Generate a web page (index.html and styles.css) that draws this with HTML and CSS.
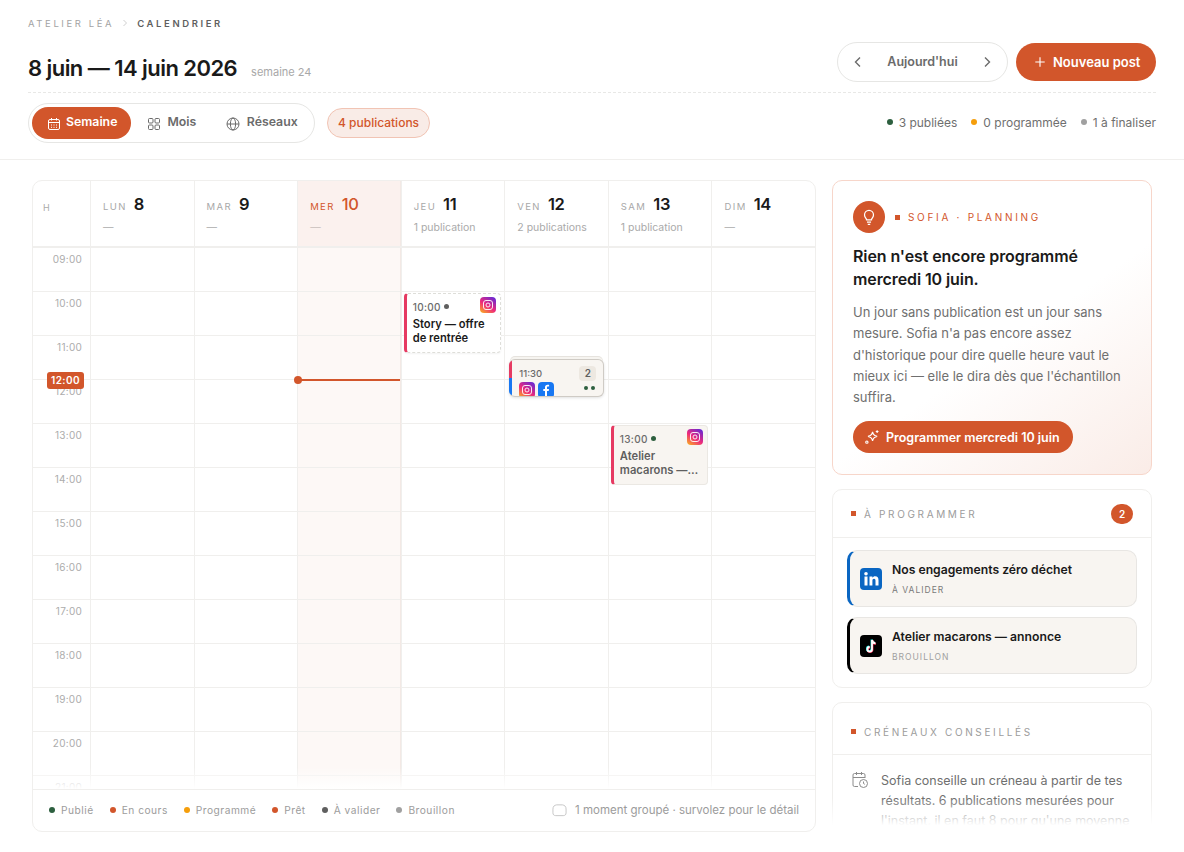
FILE: index.html
```html
<!DOCTYPE html>
<html lang="fr">
<head>
  <meta charset="UTF-8" />
  <meta name="viewport" content="width=device-width, initial-scale=1" />
  <title>Calendrier - Atelier Léa</title>
  <link rel="stylesheet" href="styles.css">
</head>
<body>
  <header class="top">
    <div class="crumbs">
      <span>Atelier Léa</span>
      <svg class="crumb-sep" viewBox="0 0 8 8"><path d="M2.500 1l3 3-3 3" /></svg>
      <strong>Calendrier</strong>
    </div>
    <div class="title-row">
      <div class="title-block">
        <h1>8 juin — 14 juin 2026</h1>
        <span class="week">semaine 24</span>
      </div>
      <div class="actions">
        <div class="nav-pill">
          <svg class="chev" viewBox="0 0 16 16"><path d="M10 3.500L5.500 8l4.500 4.500" /></svg>
          <span>Aujourd'hui</span>
          <svg class="chev" viewBox="0 0 16 16"><path d="M6 3.500L10.500 8 6 12.500" /></svg>
        </div>
        <button class="btn-new">
          <svg viewBox="0 0 14 14"><path d="M7 1.500v11M1.500 7h11" /></svg>
          Nouveau post
        </button>
      </div>
    </div>
    <div class="tool-row">
      <div class="tool-left">
        <div class="tabs">
          <div class="tab active">
            <svg viewBox="0 0 14 14"><rect x="1.500" y="2.500" width="11" height="10" rx="1.500" /><path d="M1.500 5.500h11M4.500 1v2.500M9.500 1v2.500M4 8h1M6.500 8h1M9 8h1M4 10.300h1M6.500 10.300h1M9 10.300h1" /></svg>
            Semaine
          </div>
          <div class="tab">
            <svg viewBox="0 0 14 14"><rect x="1.500" y="1.500" width="4.500" height="4.500" rx="1" /><rect x="8" y="1.500" width="4.500" height="4.500" rx="1" /><rect x="1.500" y="8" width="4.500" height="4.500" rx="1" /><rect x="8" y="8" width="4.500" height="4.500" rx="1" /></svg>
            Mois
          </div>
          <div class="tab">
            <svg viewBox="0 0 14 14"><circle cx="7" cy="7" r="6" /><ellipse cx="7" cy="7" rx="2.600" ry="6" /><path d="M1 7h12" /></svg>
            Réseaux
          </div>
        </div>
        <span class="count-pill">4 publications</span>
      </div>
      <div class="stats">
        <span><i class="dot green"></i>3 publiées</span>
        <span><i class="dot orange"></i>0 programmée</span>
        <span><i class="dot grey"></i>1 à finaliser</span>
      </div>
    </div>
  </header>

  <main class="page">
    <section class="calendar">
      <div class="cal-head">
        <div class="head-h">H</div>
        <div class="head-day"><div><span class="dname">Lun</span><span class="dnum">8</span></div><p>—</p></div>
        <div class="head-day"><div><span class="dname">Mar</span><span class="dnum">9</span></div><p>—</p></div>
        <div class="head-day today"><div><span class="dname">Mer</span><span class="dnum">10</span></div><p>—</p></div>
        <div class="head-day"><div><span class="dname">Jeu</span><span class="dnum">11</span></div><p>1 publication</p></div>
        <div class="head-day"><div><span class="dname">Ven</span><span class="dnum">12</span></div><p>2 publications</p></div>
        <div class="head-day"><div><span class="dname">Sam</span><span class="dnum">13</span></div><p>1 publication</p></div>
        <div class="head-day"><div><span class="dname">Dim</span><span class="dnum">14</span></div><p>—</p></div>
      </div>

      <div class="cal-body">
        <div class="cal-grid">
          <div class="hours">
            <div>09:00</div><div>10:00</div><div>11:00</div><div>12:00</div><div>13:00</div>
            <div>14:00</div><div>15:00</div><div>16:00</div><div>17:00</div><div>18:00</div>
            <div>19:00</div><div>20:00</div><div>21:00</div>
            <span class="now-badge">12:00</span>
          </div>
          <div class="day"></div>
          <div class="day"></div>
          <div class="day today">
            <div class="now-line"></div>
          </div>
          <div class="day">
            <article class="event event-draft">
              <div class="ev-top"><span class="ev-time">10:00</span><i class="dot slate"></i></div>
              <span class="ig ev-net"><svg viewBox="0 0 16 16"><rect x="3.500" y="3.500" width="9" height="9" rx="2.500" /><circle cx="8" cy="8" r="2" /></svg></span>
              <h4>Story — offre de rentrée</h4>
            </article>
          </div>
          <div class="day">
            <article class="event event-group">
              <div class="ev-top"><span class="ev-time">11:30</span></div>
              <span class="group-n">2</span>
              <div class="group-icons">
                <span class="ig"><svg viewBox="0 0 16 16"><rect x="3.500" y="3.500" width="9" height="9" rx="2.500" /><circle cx="8" cy="8" r="2" /></svg></span>
                <span class="fb"><svg viewBox="0 0 16 16"><path d="M9 15V9h1.700l.3-2H9V5.600c0-.6.200-1 1-1h1.100V2.800c-.3 0-.9-.1-1.500-.1C8 2.700 7 3.700 7 5.300V7H5.300v2H7v6z" /></svg></span>
              </div>
              <div class="group-dots"><i class="dot green"></i><i class="dot green"></i></div>
            </article>
          </div>
          <div class="day">
            <article class="event event-done">
              <div class="ev-top"><span class="ev-time">13:00</span><i class="dot green"></i></div>
              <span class="ig ev-net"><svg viewBox="0 0 16 16"><rect x="3.500" y="3.500" width="9" height="9" rx="2.500" /><circle cx="8" cy="8" r="2" /></svg></span>
              <h4 class="clamp">Atelier macarons — annonce</h4>
            </article>
          </div>
          <div class="day"></div>
        </div>
        <div class="cal-fade"></div>
      </div>

      <footer class="legend">
        <div class="legend-list">
          <span><i class="dot green"></i>Publié</span>
          <span><i class="dot rust"></i>En cours</span>
          <span><i class="dot orange"></i>Programmé</span>
          <span><i class="dot rust"></i>Prêt</span>
          <span><i class="dot slate"></i>À valider</span>
          <span><i class="dot grey"></i>Brouillon</span>
        </div>
        <div class="legend-note">
          <svg viewBox="0 0 16 14"><path d="M1 6c0-3 1.500-4 4-4.500h6c2.500.5 4 1.500 4 4.500v4c0 2-1 3-3 3H4c-2 0-3-1-3-3z" /></svg>
          1 moment groupé · survolez pour le détail
        </div>
      </footer>
    </section>

    <aside class="side">
      <section class="sofia">
        <div class="sofia-head">
          <span class="sofia-icon">
            <svg viewBox="0 0 16 16"><path d="M5.800 10.500c0-1.200-1.800-2-1.800-4.300a4 4 0 0 1 8 0c0 2.300-1.800 3.100-1.800 4.300zM6.200 12.500h3.600M6.900 14.500h2.200" /></svg>
          </span>
          <span class="eyebrow"><i class="sq"></i>Sofia · Planning</span>
        </div>
        <h2>Rien n'est encore programmé mercredi 10 juin.</h2>
        <p>Un jour sans publication est un jour sans mesure. Sofia n'a pas encore assez d'historique pour dire quelle heure vaut le mieux ici — elle le dira dès que l'échantillon suffira.</p>
        <button class="btn-plan">
          <svg viewBox="0 0 14 14"><path d="M7.500 2.500c.4 2.400 1.400 3.500 4 4-2.600.5-3.600 1.600-4 4-.4-2.400-1.400-3.500-4-4 2.600-.5 3.600-1.600 4-4z" /><path d="M11.500 1v2.400M10.300 2.200h2.400" /><circle cx="2.500" cy="11.500" r="1" /></svg>
          Programmer mercredi 10 juin
        </button>
      </section>

      <section class="panel">
        <div class="panel-head">
          <span class="panel-title"><i class="sq"></i>À programmer</span>
          <span class="panel-count">2</span>
        </div>
        <div class="todo-list">
          <div class="todo todo-li">
            <span class="net li"><svg viewBox="0 0 22 22"><rect x="4.500" y="8.500" width="3" height="9" /><circle cx="6" cy="5.700" r="1.800" /><path d="M9.500 8.500h2.900v1.300c.5-.9 1.500-1.500 2.800-1.500 2.300 0 3.300 1.400 3.300 3.900v5.300h-3v-4.700c0-1.200-.4-2-1.500-2s-1.600.9-1.600 2v4.700h-2.900z" /></svg></span>
            <div><h3>Nos engagements zéro déchet</h3><small class="st-dark">À valider</small></div>
          </div>
          <div class="todo todo-tt">
            <span class="net tt">
              <svg viewBox="0 0 22 22">
                <path class="tt-c" d="M11.500 4.500v9.300a2.300 2.300 0 1 1-2.300-2.300M11.500 4.500c.3 2 1.500 3.200 3.500 3.400" />
                <path class="tt-r" d="M12.500 5.500v9.300a2.300 2.300 0 1 1-2.300-2.300M12.500 5.500c.3 2 1.500 3.200 3.500 3.400" />
                <path class="tt-w" d="M12 5v9.300a2.300 2.300 0 1 1-2.300-2.300M12 5c.3 2 1.500 3.200 3.500 3.400" />
              </svg>
            </span>
            <div><h3>Atelier macarons — annonce</h3><small>Brouillon</small></div>
          </div>
        </div>
      </section>

      <section class="panel">
        <div class="panel-head panel-head-slots">
          <span class="panel-title"><i class="sq"></i>Créneaux conseillés</span>
        </div>
        <div class="slots">
          <svg viewBox="0 0 18 18"><path d="M7 15.500H3.500a1.500 1.500 0 0 1-1.500-1.500V4a1.500 1.500 0 0 1 1.500-1.500h9A1.500 1.500 0 0 1 14 4v3M2 6.500h12M5.500 1v3M10.500 1v3" /><circle cx="12.500" cy="12.500" r="4" /><path d="M12.500 10.500v2l1.300.8" /></svg>
          <p>Sofia conseille un créneau à partir de tes résultats. 6 publications mesurées pour l'instant, il en faut 8 pour qu'une moyenne soit fiable.</p>
        </div>
      </section>
      <div class="side-fade"></div>
    </aside>
  </main>
</body>
</html>
```

FILE: styles.css
```css
* {
  box-sizing: border-box;
}
body {
  margin: 0;
  height: 852px;
  overflow: hidden;
  font-family: Inter, "Noto Sans", sans-serif;
  background-color: #fff;
  color: #1a1a1a;
}
h1, h2, h3, h4, p {
  margin: 0;
}
i {
  display: block;
  flex: none;
}
button {
  font-family: inherit;
  border: none;
  cursor: pointer;
}

/* header */
.top {
  height: 160px;
  padding: 16px 28px 0;
  border-bottom: 1px solid #f0efed;
}
.crumbs {
  display: flex;
  align-items: center;
  height: 14px;
  font-size: 9.5px;
  letter-spacing: 2.600px;
  text-transform: uppercase;
  color: #a3a3a3;
}
.crumbs strong {
  font-weight: 600;
  color: #5f5f5f;
}
.crumb-sep {
  width: 8px;
  height: 8px;
  margin: 0 8px 0 7px;
  fill: none;
  stroke: #d0d0d0;
  stroke-width: 1;
}
.title-row {
  display: flex;
  justify-content: space-between;
  align-items: flex-end;
  margin-top: 12px;
  height: 51px;
  padding-bottom: 10px;
  border-bottom: 1px dashed #e8e8e6;
}
.title-block {
  display: flex;
  align-items: baseline;
  gap: 14px;
  margin-bottom: -1px;
}
h1 {
  font-size: 22px;
  line-height: 30px;
  font-weight: 600;
  letter-spacing: -0.55px;
  color: #1a1a1a;
}
.week {
  font-size: 11px;
  color: #a8a8a8;
}
.actions {
  display: flex;
  align-items: center;
  gap: 8px;
}
.nav-pill {
  display: flex;
  align-items: center;
  justify-content: space-between;
  width: 171px;
  height: 40px;
  padding: 0 12px 0;
  border: 1px solid #e6e6e4;
  border-radius: 20px;
  font-size: 12.5px;
  font-weight: 600;
  color: #6b6b6b;
}
.nav-pill span {
  margin-bottom: 2px;
}
.chev {
  width: 16px;
  height: 16px;
  fill: none;
  stroke: #6b6b6b;
  stroke-width: 1.400;
}
.btn-new {
  display: flex;
  align-items: center;
  gap: 7px;
  width: 140px;
  height: 38px;
  padding: 0 0 0 18px;
  border-radius: 19px;
  background-color: #d2562b;
  color: #fff;
  font-size: 13px;
  font-weight: 600;
}
.btn-new svg {
  width: 12px;
  height: 12px;
  fill: none;
  stroke: #fff;
  stroke-width: 1.300;
}
.tool-row {
  display: flex;
  justify-content: space-between;
  align-items: center;
  margin-top: 10px;
}
.tool-left {
  display: flex;
  align-items: center;
  gap: 12px;
}
.tabs {
  display: flex;
  align-items: center;
  gap: 4px;
  width: 287px;
  height: 40px;
  padding: 3px;
  border: 1px solid #e6e6e4;
  border-radius: 20px;
}
.tab {
  flex: none;
  display: flex;
  align-items: center;
  gap: 6.500px;
  height: 32px;
  padding: 0 13px 3px;
  font-size: 12.3px;
  font-weight: 600;
  color: #6b6b6b;
  border-radius: 16px;
}
.tab svg {
  width: 14px;
  height: 14px;
  margin-top: 4px;
  fill: none;
  stroke: #6b6b6b;
  stroke-width: 1;
}
.tab.active {
  width: 99px;
  gap: 5px;
  margin-right: -1px;
  padding: 0 0 3px 15px;
  background-color: #d2562b;
  color: #fff;
}
.tab.active svg {
  stroke: #fff;
}
.count-pill {
  padding: 6px 10px;
  height: 30px;
  border: 1px solid #f1c4b4;
  border-radius: 15px;
  background-color: #f9ece7;
  color: #d2562b;
  font-size: 12px;
  line-height: 15px;
  font-weight: 500;
}
.stats {
  display: flex;
  gap: 14px;
  margin-bottom: 2px;
  font-size: 12px;
  color: #6f6f6f;
}
.stats span {
  display: flex;
  align-items: center;
  gap: 6px;
}
.dot {
  width: 6px;
  height: 6px;
  border-radius: 50%;
}
.green { background-color: #2d5f3f; }
.orange { background-color: #f59e0b; }
.grey { background-color: #a0a0a0; }
.rust { background-color: #d2562b; }
.slate { background-color: #5f5f5f; }

/* calendrier */
.page {
  display: flex;
  gap: 16px;
  height: 692px;
  padding: 20px 32px;
}
.calendar {
  display: flex;
  flex-direction: column;
  width: 784px;
  height: 652px;
  border: 1px solid #f0efed;
  border-radius: 10px;
  overflow: hidden;
}
.cal-head,
.cal-grid {
  display: grid;
  grid-template-columns: 57px repeat(7, 1fr);
}
.cal-head {
  flex: none;
  height: 67px;
  border-bottom: 2px solid #f0efed;
}
.head-h {
  padding: 21px 0 0 10px;
  font-size: 9px;
  letter-spacing: 1px;
  color: #aaa;
}
.head-day {
  padding: 13px 0 0 12px;
  border-left: 1px solid #f0efed;
}
.head-day div {
  display: flex;
  align-items: baseline;
  gap: 7px;
  height: 22px;
}
.dname {
  font-size: 9.5px;
  letter-spacing: 1.400px;
  text-transform: uppercase;
  color: #a8a8a8;
}
.dnum {
  font-size: 16.5px;
  font-weight: 600;
  letter-spacing: -0.3px;
}
.head-day p {
  margin-top: 4px;
  font-size: 10.5px;
  line-height: 16px;
  color: #aaa;
}
.head-day.today {
  background-color: #fbf1ee;
  border-right: 1px solid #f3e9e5;
}
.head-day.today .dname,
.head-day.today .dnum {
  color: #d2562b;
}
.head-day.today .dnum {
  font-weight: 500;
}
.head-day.today p {
  color: #c9c0bb;
}
.cal-body {
  position: relative;
  flex: 1;
  overflow: hidden;
}
.cal-grid {
  height: 572px;
}
.hours {
  position: relative;
}
.hours div {
  height: 44px;
  padding: 5px 8px 0 0;
  text-align: right;
  font-size: 10px;
  line-height: 13px;
  letter-spacing: 0.25px;
  color: #acacac;
  border-bottom: 1px solid #f0efed;
}
.day {
  position: relative;
  border-left: 1px solid #f0efed;
  background-image: linear-gradient(to bottom, transparent 43px, #f0efed 43px);
  background-size: 100% 44px;
}
.day.today {
  background-color: #fdf8f6;
  border-right: 1px solid #f3e9e5;
}
.now-badge {
  position: absolute;
  top: 124px;
  right: 6px;
  width: 37px;
  height: 17px;
  border-radius: 3px;
  background-color: #d2562b;
  color: #fff;
  font-size: 10px;
  font-weight: 600;
  line-height: 17px;
  letter-spacing: 0.4px;
  text-align: center;
}
.now-line {
  position: absolute;
  top: 131px;
  left: -1px;
  right: 0;
  height: 2px;
  background-color: #d2562b;
}
.now-line::before {
  content: "";
  position: absolute;
  left: -3px;
  top: -3px;
  width: 8px;
  height: 8px;
  border-radius: 50%;
  background-color: #d2562b;
}
.event {
  position: absolute;
  padding: 6px 5px 0 6px;
  border-radius: 4px;
  border-left: 3px solid #e63a62;
}
.ev-top {
  display: flex;
  align-items: center;
  gap: 3px;
  height: 13px;
}
.ev-top .dot {
  width: 5px;
  height: 5px;
}
.ev-time {
  font-size: 10px;
  font-weight: 500;
  letter-spacing: 0.3px;
  color: #6b6b6b;
}
.ev-net {
  position: absolute;
  top: 3px;
  right: 4px;
}
.event h4 {
  margin-top: 4px;
  font-size: 11.2px;
  line-height: 14px;
  font-weight: 600;
}
.event-draft {
  top: 45px;
  left: 2px;
  width: 97px;
  height: 60px;
  background-color: #fff;
  border-top: 1px dashed #deded9;
  border-right: 1px dashed #deded9;
  border-bottom: 1px dashed #deded9;
  box-shadow: 0 1px 2px rgba(0, 0, 0, 0.05);
}
.event-done {
  top: 177px;
  left: 2px;
  width: 97px;
  height: 60px;
  background-color: #f8f5f1;
  border-top: 1px solid #ebe8e3;
  border-right: 1px solid #ebe8e3;
  border-bottom: 1px solid #ebe8e3;
}
.event-done h4 {
  color: #5f5f5f;
}
.clamp {
  display: -webkit-box;
  -webkit-box-orient: vertical;
  -webkit-line-clamp: 2;
  overflow: hidden;
}
.event-group {
  top: 111px;
  left: 4px;
  width: 95px;
  height: 38px;
  padding: 6px 0 0 7px;
  overflow: hidden;
  background-color: #f8f5f1;
  border: 1px solid #cfcbc5;
  border-left: none;
  border-radius: 6px;
  box-shadow: 0 -3px 0 -1px #f6f4f0, 0 -4px 0 -1px #e6e3de, 0 1px 3px rgba(0, 0, 0, 0.12);
}
.event-group::before {
  content: "";
  position: absolute;
  top: 0;
  left: 0;
  bottom: 0;
  width: 3px;
  background: linear-gradient(to bottom, #e63a62 50%, #1877f2 50%);
}
.event-group .ev-top {
  margin-left: 3px;
  padding-top: 1px;
}
.event-group .ev-time {
  font-size: 9.500px;
  letter-spacing: 0;
}
.group-n {
  position: absolute;
  top: 6px;
  right: 7px;
  width: 17px;
  height: 15px;
  border-radius: 4px;
  background-color: #ede8e1;
  color: #5f5f5f;
  font-size: 10px;
  font-weight: 600;
  line-height: 15px;
  text-align: center;
}
.group-icons {
  display: flex;
  gap: 3px;
  margin: 3px 0 0 3px;
}
.group-dots {
  position: absolute;
  right: 8px;
  bottom: 6px;
  display: flex;
  gap: 3px;
}
.group-dots .dot {
  width: 4px;
  height: 4px;
}
.ig,
.fb {
  display: block;
  flex: none;
  width: 16px;
  height: 16px;
  border-radius: 4px;
}
.ig {
  background: linear-gradient(35deg, #f9a825 5%, #ee2a7b 45%, #6228d7 95%);
}
.ig svg {
  display: block;
  fill: none;
  stroke: #fff;
  stroke-width: 1;
  opacity: 0.9;
}
.fb {
  background-color: #1877f2;
  overflow: hidden;
}
.fb svg {
  display: block;
  fill: #fff;
}
.cal-fade {
  position: absolute;
  left: 0;
  right: 0;
  bottom: 0;
  height: 22px;
  background: linear-gradient(to bottom, rgba(255, 255, 255, 0), #fff);
}
.legend {
  flex: none;
  display: flex;
  justify-content: space-between;
  align-items: center;
  height: 42px;
  padding: 0 16px 2px;
  border-top: 1px solid #f0efed;
  font-size: 10.2px;
  color: #9c9c9c;
}
.legend-list {
  display: flex;
  gap: 16px;
  letter-spacing: 0.5px;
}
.legend-list span {
  display: flex;
  align-items: center;
  gap: 6px;
}
.legend-note {
  display: flex;
  align-items: center;
  gap: 8px;
  font-size: 11.5px;
}
.legend-note svg {
  width: 15px;
  height: 14px;
  fill: none;
  stroke: #c4c4c4;
  stroke-width: 1;
}

/* colonne droite */
.side {
  position: relative;
  display: flex;
  flex-direction: column;
  gap: 14px;
  width: 320px;
  height: 652px;
  overflow: hidden;
}
.sofia {
  flex: none;
  height: 295px;
  padding: 20px 20px 0;
  border: 1px solid #f7d6ca;
  border-radius: 10px;
  background: linear-gradient(145deg, #fff 55%, #faece7 100%);
}
.sofia-head {
  display: flex;
  align-items: center;
  gap: 10px;
}
.sofia-icon {
  display: flex;
  align-items: center;
  justify-content: center;
  width: 32px;
  height: 32px;
  border-radius: 50%;
  background-color: #d2562b;
}
.sofia-icon svg {
  width: 18px;
  height: 18px;
  fill: none;
  stroke: #fff;
  stroke-width: 1.100;
}
.sq {
  width: 5px;
  height: 5px;
  background-color: #d2562b;
}
.eyebrow {
  display: flex;
  align-items: center;
  gap: 8px;
  font-size: 10px;
  letter-spacing: 2.700px;
  text-transform: uppercase;
  color: #d2562b;
}
.sofia h2 {
  margin-top: 12px;
  font-size: 16px;
  line-height: 23px;
  font-weight: 600;
  letter-spacing: -0.1px;
}
.sofia p {
  margin-top: 11px;
  font-size: 13px;
  line-height: 21.250px;
  color: #6f6f6f;
}
.btn-plan {
  display: flex;
  align-items: center;
  gap: 6px;
  height: 32px;
  margin-top: 13px;
  padding: 0 13px 0 11px;
  border-radius: 16px;
  background-color: #d2562b;
  color: #fff;
  font-size: 12.5px;
  font-weight: 600;
}
.btn-plan svg {
  width: 16px;
  height: 16px;
  fill: none;
  stroke: #fff;
  stroke-width: 1;
}
.panel {
  flex: none;
  border: 1px solid #f0efed;
  border-radius: 10px;
  background-color: #fff;
}
.panel-head {
  display: flex;
  justify-content: space-between;
  align-items: center;
  height: 48px;
  padding: 0 18px;
  border-bottom: 1px solid #f0efed;
}
.panel-head-slots {
  height: 52px;
  padding-top: 6px;
}
.panel-title {
  display: flex;
  align-items: center;
  gap: 8px;
  font-size: 10px;
  letter-spacing: 2.650px;
  text-transform: uppercase;
  color: #9c9c9c;
}
.panel-count {
  width: 22px;
  height: 20px;
  border-radius: 10px;
  background-color: #d2562b;
  color: #fff;
  font-size: 10px;
  font-weight: 600;
  line-height: 20px;
  text-align: center;
}
.todo-list {
  display: flex;
  flex-direction: column;
  gap: 10px;
  padding: 12px 14px 13px;
}
.todo {
  display: flex;
  align-items: center;
  gap: 10px;
  height: 57px;
  padding: 0 12px 0 10px;
  background-color: #f8f5f1;
  border: 1px solid #e8e6e3;
  border-left: 3px solid #0a66c2;
  border-radius: 10px;
}
.todo-tt {
  border-left-color: #000;
}
.net {
  display: block;
  flex: none;
  width: 22px;
  height: 22px;
  border-radius: 4px;
}
.net svg {
  display: block;
}
.li {
  background-color: #0a66c2;
}
.li svg {
  fill: #fff;
}
.tt {
  background-color: #000;
}
.tt svg {
  fill: none;
  stroke-width: 1.800;
}
.tt-c { stroke: #25f4ee; }
.tt-r { stroke: #fe2c55; }
.tt-w { stroke: #fff; }
.todo h3 {
  font-size: 12.2px;
  line-height: 16px;
  font-weight: 600;
}
.todo small {
  display: block;
  margin-top: 7px;
  font-size: 8.5px;
  line-height: 11px;
  letter-spacing: 1px;
  text-transform: uppercase;
  color: #a0a0a0;
}
.todo small.st-dark {
  color: #7a7a7a;
}
.slots {
  display: flex;
  gap: 12px;
  padding: 16px 18px 20px;
}
.slots svg {
  flex: none;
  width: 18px;
  height: 18px;
  fill: none;
  stroke: #8c8c8c;
  stroke-width: 1;
}
.slots p {
  font-size: 12.5px;
  line-height: 20px;
  color: #6f6f6f;
}
.side-fade {
  position: absolute;
  left: 0;
  right: 0;
  bottom: 0;
  height: 34px;
  background: linear-gradient(to bottom, rgba(255, 255, 255, 0), #fff 80%);
}
```
